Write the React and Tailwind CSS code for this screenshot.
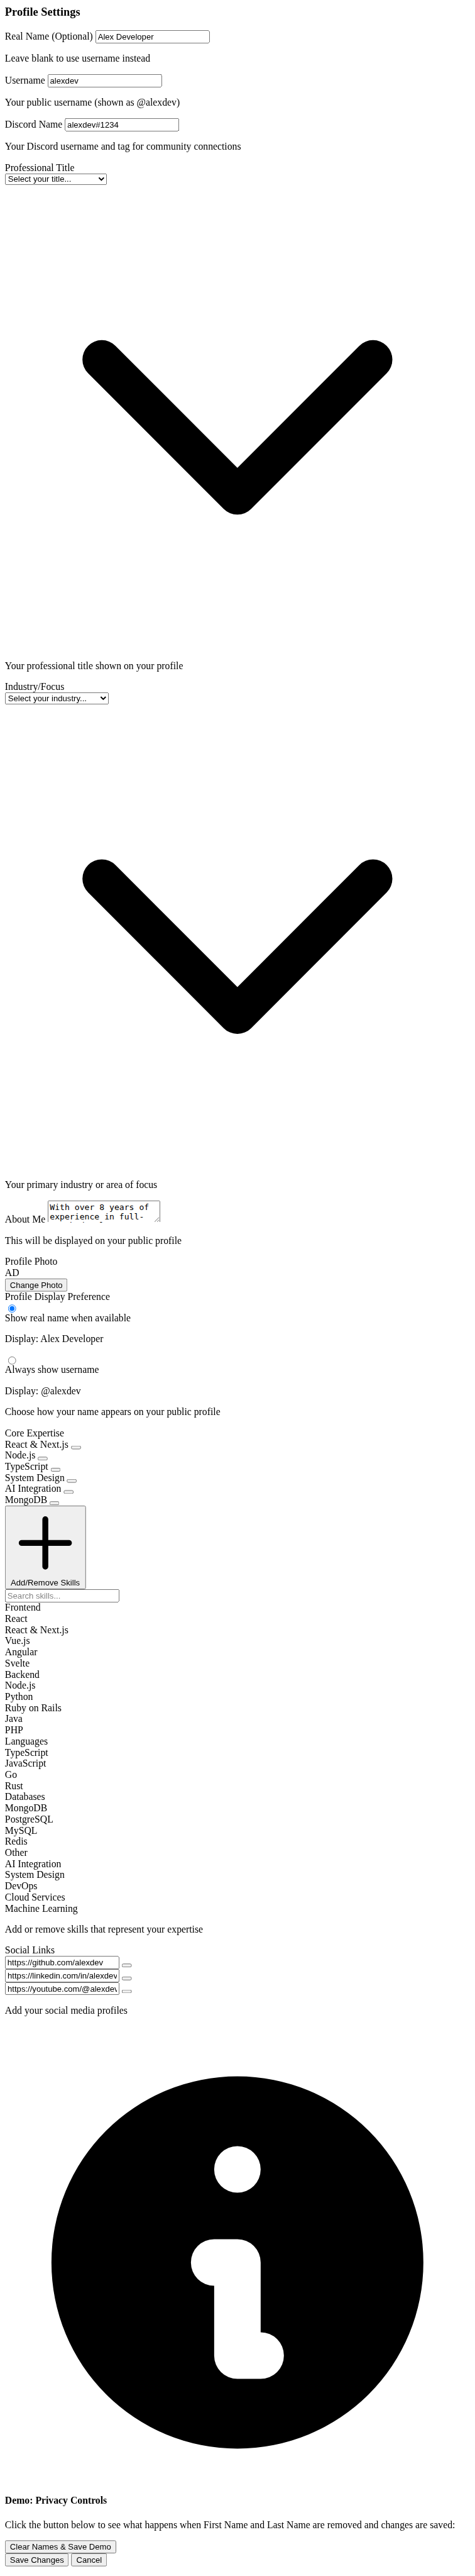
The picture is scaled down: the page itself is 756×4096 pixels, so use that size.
import React from 'react';

const coreSkills = ['React & Next.js', 'Node.js', 'TypeScript', 'System Design', 'AI Integration', 'MongoDB'];

const skillGroups = [
  { name: 'Frontend', skills: ['React', 'React & Next.js', 'Vue.js', 'Angular', 'Svelte'] },
  { name: 'Backend', skills: ['Node.js', 'Python', 'Ruby on Rails', 'Java', 'PHP'] },
  { name: 'Languages', skills: ['TypeScript', 'JavaScript', 'Go', 'Rust'] },
  { name: 'Databases', skills: ['MongoDB', 'PostgreSQL', 'MySQL', 'Redis'] },
  { name: 'Other', skills: ['AI Integration', 'System Design', 'DevOps', 'Cloud Services', 'Machine Learning'] },
];

const socialLinks = [
  'https://github.com/alexdev',
  'https://linkedin.com/in/alexdev',
  'https://youtube.com/@alexdev',
];

function Hint({ children }) {
  return <p className="my-4">{children}</p>;
}

function TextInput(props) {
  return <input type="text" className="[all:revert] w-[185px]! h-[21px]! box-border!" {...props} />;
}

function Button({ children, label }) {
  return (
    <button type="button" aria-label={label} className="[all:revert]">
      {children}
    </button>
  );
}

function Chevron() {
  return (
    <svg viewBox="0 0 24 24" className="block w-full" fill="none" stroke="#000" strokeWidth="2" strokeLinecap="round" strokeLinejoin="round">
      <path d="M5 9l7 7 7-7" />
    </svg>
  );
}

function Field({ label, hint, value }) {
  return (
    <div>
      <label>{label}</label> <TextInput defaultValue={value} />
      <Hint>{hint}</Hint>
    </div>
  );
}

function DisplayOption({ title, preview, checked }) {
  return (
    <label className="block">
      <span className="flex h-4">
        <input type="radio" name="display" defaultChecked={checked} className="[all:revert]" />
      </span>
      <div>{title}</div>
      <Hint>{preview}</Hint>
    </label>
  );
}

export default function App() {
  return (
    <div className="h-[4096px] w-[756px] overflow-hidden bg-white">
      <div className="h-[4163px] w-[768px] origin-top-left scale-[0.984] p-2 font-['Liberation_Serif',serif] text-base leading-[normal] text-black">
        <h3 className="mb-[18.72px] text-[18.72px] font-bold">Profile Settings</h3>

        <Field label="Real Name (Optional)" value="Alex Developer" hint="Leave blank to use username instead" />
        <Field label="Username" value="alexdev" hint="Your public username (shown as @alexdev)" />
        <Field label="Discord Name" value="alexdev#1234" hint="Your Discord username and tag for community connections" />

        <div>
          <label className="block">Professional Title</label>
          <select className="[all:revert] block! h-[19px]! w-[165px]!">
            <option>Select your title...</option>
          </select>
          <Chevron />
          <Hint>Your professional title shown on your profile</Hint>
        </div>

        <div>
          <label className="block">Industry/Focus</label>
          <select className="[all:revert] block! h-[19px]! w-[168px]!">
            <option>Select your industry...</option>
          </select>
          <Chevron />
          <Hint>Your primary industry or area of focus</Hint>
        </div>

        <div>
          <label>About Me</label>{' '}
          <textarea
            className="[all:revert] box-border! h-[36px]! w-[182px]! [scrollbar-width:none]!"
            defaultValue="With over 8 years of experience in full-stack development, I specialize in building scalable web applications."
          />
          <Hint>This will be displayed on your public profile</Hint>
        </div>

        <div>
          <label className="block">Profile Photo</label>
          <div>AD</div>
          <div><Button>Change Photo</Button></div>
        </div>

        <div>
          <div>Profile Display Preference</div>
          <DisplayOption title="Show real name when available" preview="Display: Alex Developer" checked />
          <DisplayOption title="Always show username" preview="Display: @alexdev" />
          <Hint>Choose how your name appears on your public profile</Hint>
        </div>

        <div>
          <div>Core Expertise</div>
          {coreSkills.map((skill) => (
            <div key={skill}>
              <span>{skill}</span> <Button label={`Remove ${skill}`} />
            </div>
          ))}
          <button type="button" className="[all:revert] block! w-[130.6px]!">
            <svg viewBox="0 0 24 24" className="block w-full" fill="none" stroke="#000" strokeWidth="2" strokeLinecap="round">
              <path d="M12 4v16M4 12h16" />
            </svg>
            Add/Remove Skills
          </button>
          <div><TextInput placeholder="Search skills..." /></div>
          {skillGroups.map((group) => (
            <div key={group.name}>
              <div>{group.name}</div>
              {group.skills.map((skill) => (
                <div key={skill}>{skill}</div>
              ))}
            </div>
          ))}
          <Hint>Add or remove skills that represent your expertise</Hint>
        </div>

        <div>
          <div>Social Links</div>
          {socialLinks.map((link) => (
            <div key={link}>
              <TextInput defaultValue={link} /> <Button label="Remove link" />
            </div>
          ))}
          <Hint>Add your social media profiles</Hint>
        </div>

        <div>
          <h4 className="my-[21.28px] font-bold">
            <svg viewBox="0 0 20 20" className="block w-full" fill="#000">
              <path
                fillRule="evenodd"
                clipRule="evenodd"
                d="M18 10a8 8 0 11-16 0 8 8 0 0116 0zm-7-4a1 1 0 11-2 0 1 1 0 012 0zM9 9a1 1 0 000 2v3a1 1 0 001 1h1a1 1 0 100-2v-3a1 1 0 00-1-1H9z"
              />
            </svg>
            Demo: Privacy Controls
          </h4>
          <Hint>Click the button below to see what happens when First Name and Last Name are removed and changes are saved:</Hint>
          <div><Button>Clear Names &amp; Save Demo</Button></div>
        </div>

        <div>
          <Button>Save Changes</Button> <Button>Cancel</Button>
        </div>
      </div>
    </div>
  );
}
